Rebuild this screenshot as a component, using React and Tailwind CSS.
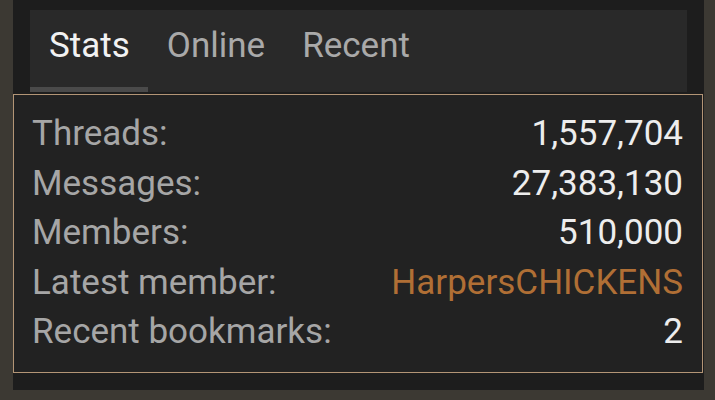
const TABS = ['Stats', 'Online', 'Recent']

const ROWS = [
  ['Threads:', '1,557,704'],
  ['Messages:', '27,383,130'],
  ['Members:', '510,000'],
  ['Latest member:', 'HarpersCHICKENS', true],
  ['Recent bookmarks:', '2'],
]

export default function App() {
  return (
    <div className="h-[400px] w-[715px] bg-[#3c3933] pl-[13px] pr-[11px] pb-[10px] font-['Roboto',sans-serif]">
      <div className="flex h-full flex-col bg-[#1d1d1d] pt-[10px]">
        <div className="mx-[17px] flex h-[82px] bg-[#292929]">
          {TABS.map((t, i) => (
            <div
              key={t}
              className={`flex items-start pl-[19px] pr-[18px] pt-[16px] text-[35px] leading-[40px] border-b-[5px] ${i === 0 ? 'text-[#f2f2f2] border-[#4a4a4a]' : 'text-[#a9a9a9] border-transparent'}`}
            >
              {t}
            </div>
          ))}
        </div>
        <div className="mt-[2px] mr-px border border-[#b39576] bg-[#222222] pl-[18px] pr-[19px] pt-[14px] pb-[15px] text-[35px] leading-[49.5px]">
          {ROWS.map(([label, value, link]) => (
            <div key={label} className="flex justify-between">
              <span className="text-[#a6a6a6]">{label}</span>
              <span className={link ? 'text-[#b06f35]' : 'text-[#ededed]'}>{value}</span>
            </div>
          ))}
        </div>
      </div>
    </div>
  )
}
